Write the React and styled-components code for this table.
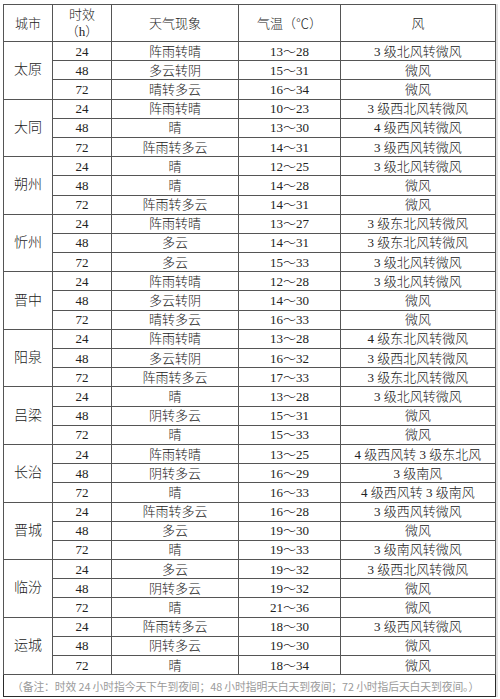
import React from 'react';
import styled, { createGlobalStyle } from 'styled-components';

const GlobalStyle = createGlobalStyle`
  body {
    margin: 0;
    background: #fff;
  }
`;

const Page = styled.div`
  padding: 4px 0 0 3px;
  width: 500px;
  box-sizing: border-box;
`;

const Table = styled.table`
  width: 493px;
  border-collapse: collapse;
  table-layout: fixed;
  border: 1px solid #2a2a2a;
  box-shadow: 2px 0 0 #e2e2e2;
  font-family: "Liberation Serif", "Noto Sans CJK SC", serif;
  font-size: 13px;
  color: #222;
`;

const Col = styled.col`
  width: ${props => props.w}px;
`;

const HeadRow = styled.tr`
  height: 37px;
`;

const Row = styled.tr`
  height: 19.2px;
  border-top: 1px solid ${props => (props.first ? '#2a2a2a' : '#555')};
`;

const Cell = styled.td`
  border: 1px solid #555;
  padding: 0;
  text-align: center;
  vertical-align: middle;
  line-height: 1;
  white-space: nowrap;
  font-weight: 300;
`;

const HeadCell = styled(Cell)`
  line-height: 17px;
`;

const CityCell = styled(Cell)`
  font-size: 14px;
  border-top: 1px solid #2a2a2a;
`;

const NoteRow = styled.tr`
  height: 22px;
  border-top: 1px solid #2a2a2a;
`;

const NoteCell = styled.td`
  padding: 0 0 0 8px;
  text-align: left;
  vertical-align: middle;
  font-family: "Noto Sans CJK SC", sans-serif;
  font-size: 10.8px;
  letter-spacing: -0.1px;
  color: #9a9a9a;
  white-space: nowrap;
`;

const data = [
  ['太原', [
    ['24', '阵雨转晴', '13～28', '3 级北风转微风'],
    ['48', '多云转阴', '15～31', '微风'],
    ['72', '晴转多云', '16～34', '微风'],
  ]],
  ['大同', [
    ['24', '阵雨转晴', '10～23', '3 级西北风转微风'],
    ['48', '晴', '13～30', '4 级西风转微风'],
    ['72', '阵雨转多云', '14～31', '3 级西风转微风'],
  ]],
  ['朔州', [
    ['24', '晴', '12～25', '3 级北风转微风'],
    ['48', '晴', '14～28', '微风'],
    ['72', '阵雨转多云', '14～31', '微风'],
  ]],
  ['忻州', [
    ['24', '阵雨转晴', '13～27', '3 级东北风转微风'],
    ['48', '多云', '14～31', '3 级东北风转微风'],
    ['72', '多云', '15～33', '3 级北风转微风'],
  ]],
  ['晋中', [
    ['24', '阵雨转晴', '12～28', '3 级北风转微风'],
    ['48', '多云转阴', '14～30', '微风'],
    ['72', '晴转多云', '16～33', '微风'],
  ]],
  ['阳泉', [
    ['24', '阵雨转晴', '13～28', '4 级东北风转微风'],
    ['48', '多云转阴', '16～32', '3 级西北风转微风'],
    ['72', '阵雨转多云', '17～33', '3 级东北风转微风'],
  ]],
  ['吕梁', [
    ['24', '晴', '13～28', '3 级北风转微风'],
    ['48', '阴转多云', '15～31', '微风'],
    ['72', '晴', '15～33', '微风'],
  ]],
  ['长治', [
    ['24', '阵雨转晴', '13～25', '4 级西风转 3 级东北风'],
    ['48', '阴转多云', '16～29', '3 级南风'],
    ['72', '晴', '16～33', '4 级西风转 3 级南风'],
  ]],
  ['晋城', [
    ['24', '阵雨转多云', '16～28', '3 级西风转微风'],
    ['48', '多云', '19～30', '微风'],
    ['72', '晴', '19～33', '3 级南风转微风'],
  ]],
  ['临汾', [
    ['24', '多云', '19～32', '3 级西北风转微风'],
    ['48', '阴转多云', '19～32', '微风'],
    ['72', '晴', '21～36', '微风'],
  ]],
  ['运城', [
    ['24', '阵雨转多云', '18～30', '3 级西风转微风'],
    ['48', '阴转多云', '19～30', '微风'],
    ['72', '晴', '18～34', '微风'],
  ]],
];

const App = () => (
  <Page>
    <GlobalStyle />
    <Table>
      <colgroup>
        <Col w={49} />
        <Col w={59} />
        <Col w={127} />
        <Col w={102} />
        <Col w={155} />
      </colgroup>
      <tbody>
        <HeadRow>
          <HeadCell>城市</HeadCell>
          <HeadCell>时效<br />（h）</HeadCell>
          <HeadCell>天气现象</HeadCell>
          <HeadCell>气温（℃）</HeadCell>
          <HeadCell>风</HeadCell>
        </HeadRow>
        {data.map(([city, rows]) =>
          rows.map((r, i) => (
            <Row key={city + r[0]} first={i === 0}>
              {i === 0 && <CityCell rowSpan={3}>{city}</CityCell>}
              <Cell>{r[0]}</Cell>
              <Cell>{r[1]}</Cell>
              <Cell>{r[2]}</Cell>
              <Cell>{r[3]}</Cell>
            </Row>
          ))
        )}
        <NoteRow>
          <NoteCell colSpan={5}>
            （备注：时效 24 小时指今天下午到夜间；48 小时指明天白天到夜间；72 小时指后天白天到夜间。）
          </NoteCell>
        </NoteRow>
      </tbody>
    </Table>
  </Page>
);

export default App;
